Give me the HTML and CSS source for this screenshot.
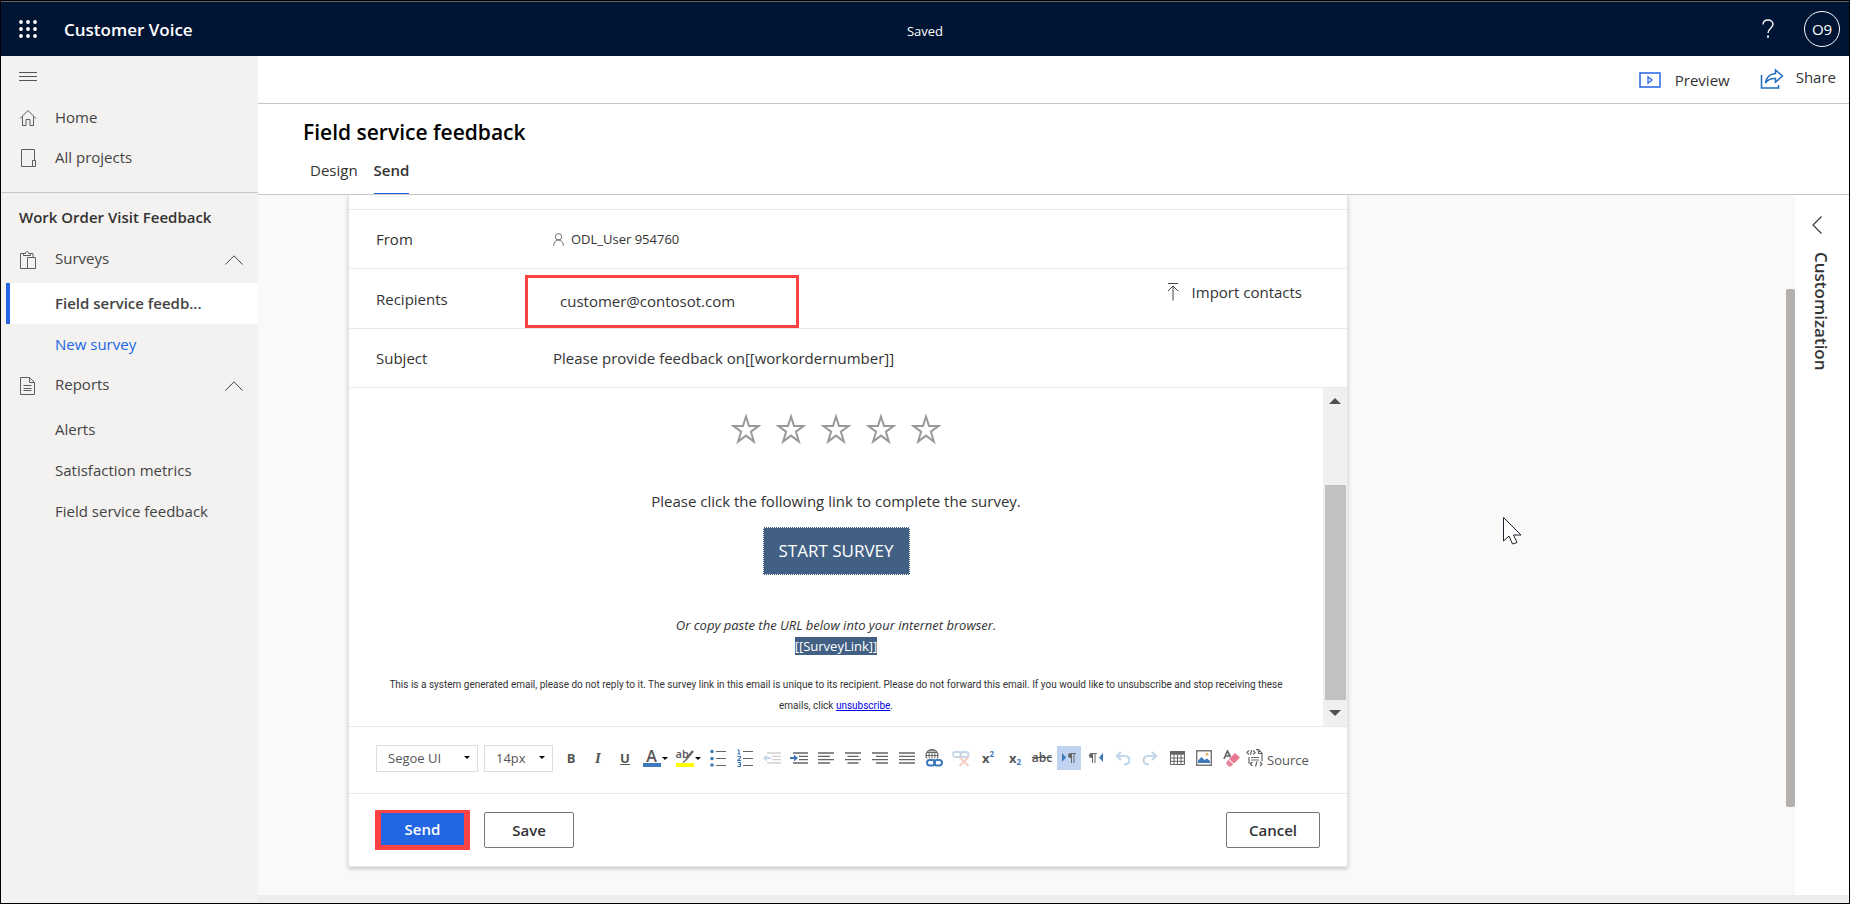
FILE: index.html
```html
<!DOCTYPE html>
<html lang="en">
<head>
<meta charset="utf-8">
<title>Customer Voice</title>
<link rel="stylesheet" href="styles.css">
</head>
<body>
<div class="app">
  <header class="topbar">
    <div class="top-left">
      <button class="bare waffle" type="button" aria-label="App launcher">
        <svg width="18" height="18" viewBox="0 0 18 18" fill="#fff"><circle cx="2" cy="2" r="1.9"/><circle cx="9" cy="2" r="1.9"/><circle cx="16" cy="2" r="1.9"/><circle cx="2" cy="9" r="1.9"/><circle cx="9" cy="9" r="1.9"/><circle cx="16" cy="9" r="1.9"/><circle cx="2" cy="16" r="1.9"/><circle cx="9" cy="16" r="1.9"/><circle cx="16" cy="16" r="1.9"/></svg>
      </button>
      <span class="brand">Customer Voice</span>
    </div>
    <span class="status">Saved</span>
    <div class="top-actions">
      <button class="bare" type="button" aria-label="Help">
        <svg width="12" height="20" viewBox="0 0 12 20" fill="none" stroke="#fff" stroke-width="1.4"><path d="M1 5.500C1 2.500 3.200 1 6 1s5 1.700 5 4.300c0 3.700-5 4.200-5 8.700"/><path d="M6 16.500v2.200" stroke-width="1.800"/></svg>
      </button>
      <button class="bare avatar" type="button">O9</button>
    </div>
  </header>

  <div class="body">
    <nav class="sidebar">
      <button class="bare burger" type="button" aria-label="Collapse navigation">
        <svg width="18" height="10" viewBox="0 0 18 10" stroke="#555" stroke-width="1"><path d="M0 .5h18M0 4.500h18M0 8.500h18"/></svg>
      </button>
      <a class="nav-row" href="#">
        <svg width="18" height="18" viewBox="0 0 18 18" fill="none" stroke="#605e5c"><path d="M1 9.500 9 1.500l8 8M3.500 7.500v9h3.500v-6h4v6h3.500v-9"/></svg>
        <span>Home</span></a>
      <a class="nav-row" href="#">
        <svg width="18" height="20" viewBox="0 0 18 20" fill="none" stroke="#605e5c"><path d="M15.500 12.500v-11h-13v17h11M13.500 12.500h3v6h-3z"/></svg>
        <span>All projects</span></a>
      <div class="nav-project">Work Order Visit Feedback</div>
      <button class="bare nav-row nav-group" type="button">
        <svg width="18" height="20" viewBox="0 0 18 20" fill="none" stroke="#605e5c"><path d="M4.500 3.500h-3v15h7M11.500 3.500h2.500v4M4.500 5.500v-2h2c0-2.500 3-2.500 3 0h2v2zM8.500 7.500h8v11h-8z"/></svg>
        <span>Surveys</span>
        <svg class="chev" width="18" height="10" viewBox="0 0 18 10" fill="none" stroke="#444"><path d="M.5 9.500 9 .8l8.500 8.700"/></svg>
      </button>
      <a class="nav-row nav-child selected" href="#"><span>Field service feedb...</span></a>
      <a class="nav-row nav-child accent" href="#"><span>New survey</span></a>
      <button class="bare nav-row nav-group" type="button">
        <svg width="18" height="20" viewBox="0 0 18 20" fill="none" stroke="#605e5c"><path d="M1.500 1.500h9l5 5v12h-14zM10.500 1.500v5h5M4.500 9.500h8M4.500 12.500h8M4.500 14.500h8"/></svg>
        <span>Reports</span>
        <svg class="chev" width="18" height="10" viewBox="0 0 18 10" fill="none" stroke="#444"><path d="M.5 9.500 9 .8l8.500 8.700"/></svg>
      </button>
      <a class="nav-row nav-child" href="#"><span>Alerts</span></a>
      <a class="nav-row nav-child" href="#"><span>Satisfaction metrics</span></a>
      <a class="nav-row nav-child" href="#"><span>Field service feedback</span></a>
    </nav>

    <main class="main">
      <div class="commands">
        <button class="bare command" type="button">
          <svg width="22" height="16" viewBox="0 0 22 16" fill="none" stroke="#2266e3"><path d="M1 1h20v14H1z" stroke-width="1.500"/><path d="M9 4.800v6.400L13 8z" stroke-width="1.300"/></svg>
          <span>Preview</span></button>
        <button class="bare command share" type="button">
          <svg width="24" height="22" viewBox="0 0 24 22" fill="none" stroke="#1f6cbf" stroke-width="1.500"><path d="M1.500 7v13h17v-3"/><path d="M15.500 2l7 6-7 6v-3.500c-5-.3-7.800 1.200-10 4.500.8-5.500 4-9 10-9.500z"/></svg>
          <span>Share</span></button>
      </div>
      <div class="heading">
        <h1>Field service feedback</h1>
        <div class="tabs">
          <a class="tab" href="#">Design</a>
          <a class="tab active" href="#">Send</a>
        </div>
      </div>

      <div class="workspace">
        <div class="canvas">
          <form class="card">
            <div class="row-cut"></div>
            <div class="field">
              <span class="label">From</span>
              <span class="sender">
                <svg width="11" height="13" viewBox="0 0 11 13" fill="none" stroke="#605e5c" stroke-width=".9"><circle cx="5.500" cy="3.800" r="3.200"/><path d="M.6 12.800C.8 9 3 7 5.500 7s4.700 2 4.900 5.800"/></svg>
                ODL_User 954760</span>
            </div>
            <div class="field recipients">
              <label class="label" for="recipients">Recipients</label>
              <input class="text marked" id="recipients" type="text" value="customer@contosot.com">
              <button class="bare import" type="button">
                <svg width="12" height="19" viewBox="0 0 12 19" fill="none" stroke="#444"><path d="M1 1.500h10M6 18.500v-14M1 9l5-5 5 5"/></svg>
                <span>Import contacts</span></button>
            </div>
            <div class="field">
              <label class="label" for="subject">Subject</label>
              <input class="text subject" id="subject" type="text" value="Please provide feedback on[[workordernumber]]">
            </div>

            <div class="editor">
              <div class="message">
                <div class="stars">
                  <svg width="30" height="31" viewBox="0 0 30 31"><path d="M15 2.500 18 12h9.500l-7.600 5.700 3 9.800L15 21.600l-7.900 5.900 3-9.800L2.500 12H12z"/></svg>
                  <svg width="30" height="31" viewBox="0 0 30 31"><path d="M15 2.500 18 12h9.500l-7.600 5.700 3 9.800L15 21.600l-7.900 5.900 3-9.800L2.500 12H12z"/></svg>
                  <svg width="30" height="31" viewBox="0 0 30 31"><path d="M15 2.500 18 12h9.500l-7.600 5.700 3 9.800L15 21.600l-7.900 5.900 3-9.800L2.500 12H12z"/></svg>
                  <svg width="30" height="31" viewBox="0 0 30 31"><path d="M15 2.500 18 12h9.500l-7.600 5.700 3 9.800L15 21.600l-7.900 5.900 3-9.800L2.500 12H12z"/></svg>
                  <svg width="30" height="31" viewBox="0 0 30 31"><path d="M15 2.500 18 12h9.500l-7.600 5.700 3 9.800L15 21.600l-7.900 5.900 3-9.800L2.500 12H12z"/></svg>
                </div>
                <p class="prompt">Please click the following link to complete the survey.</p>
                <button class="start" type="button">START SURVEY</button>
                <p class="copy">Or copy paste the URL below into your internet browser.</p>
                <span class="token">[[SurveyLink]]</span>
                <p class="legal">This is a system generated email, please do not reply to it. The survey link in this email is unique to its recipient. Please do not forward this email. If you would like to unsubscribe and stop receiving these emails, click <a href="#">unsubscribe</a>.</p>
              </div>
              <div class="scroll">
                <svg width="12" height="6" viewBox="0 0 12 6" fill="#505050"><path d="M6 0l6 6H0z"/></svg>
                <div class="scroll-thumb"></div>
                <svg width="12" height="6" viewBox="0 0 12 6" fill="#505050"><path d="M0 0h12L6 6z"/></svg>
              </div>
            </div>

            <div class="tools">
              <div class="pick font"><select aria-label="Font"><option>Segoe UI</option></select>
                <svg width="6" height="3" viewBox="0 0 6 3"><path d="M0 0h6L3 3z"/></svg></div>
              <div class="pick size"><select aria-label="Size"><option>14px</option></select>
                <svg width="6" height="3" viewBox="0 0 6 3"><path d="M0 0h6L3 3z"/></svg></div>
              <div class="icons">
                <button class="bare tool glyph" type="button">B</button>
                <button class="bare tool glyph ital" type="button">I</button>
                <button class="bare tool glyph under" type="button">U</button>
                <button class="bare tool wide" type="button" aria-label="Text color"><span class="ink">A</span><svg width="6" height="3" viewBox="0 0 6 3"><path d="M0 0h6L3 3z"/></svg></button>
                <button class="bare tool wide" type="button" aria-label="Highlight"><span class="ink mark">ab<svg class="pen" width="12" height="13" viewBox="0 0 12 13"><path d="M11 1 5 8" stroke="#666" stroke-width="2.500"/><path d="M5 7l1 2-4 3.500H0L3 10z" fill="#666"/></svg></span><svg width="6" height="3" viewBox="0 0 6 3"><path d="M0 0h6L3 3z"/></svg></button>
                <button class="bare tool" type="button" aria-label="Bulleted list"><svg width="16" height="18" viewBox="0 0 16 18"><g fill="#3f79b9"><circle cx="2" cy="2.500" r="1.800"/><circle cx="2" cy="9.500" r="1.800"/><circle cx="2" cy="16" r="1.800"/></g><path d="M6 2.500h10M6 9.500h10M6 16.500h10" stroke="#666"/></svg></button>
                <button class="bare tool" type="button" aria-label="Numbered list"><svg width="16" height="18" viewBox="0 0 16 18" fill="none"><path d="M.5 1h1.500v4M.5 5h3M.5 7.500h3V9l-3 2.500h3.500M.5 13.500h3v4h-3M1.500 15.500h2" stroke="#3f79b9" stroke-width="1.100"/><path d="M6 2.500h10M6 9.500h10M6 16.500h10" stroke="#666"/></svg></button>
                <button class="bare tool faded" type="button" aria-label="Decrease indent"><svg width="18" height="12" viewBox="0 0 18 12"><path d="M4 1h14M9 4.300h9M9 7.600h9M4 11h14" stroke="#666" stroke-width="1.300"/><path d="M0 6l4-3.500V5h4v2H4v2.500z" fill="#3f79b9"/></svg></button>
                <button class="bare tool" type="button" aria-label="Increase indent"><svg width="18" height="12" viewBox="0 0 18 12"><path d="M3 1h15M9 4.300h9M9 7.600h9M3 11h15" stroke="#666" stroke-width="1.300"/><path d="M8 6 4 2.500V5H0v2h4v2.500z" fill="#3f79b9"/></svg></button>
                <button class="bare tool" type="button" aria-label="Align left"><svg width="16" height="12" viewBox="0 0 16 12" stroke="#666" stroke-width="1.300"><path d="M0 1h16M0 4.300h12M0 7.600h16M0 11h12"/></svg></button>
                <button class="bare tool" type="button" aria-label="Center"><svg width="16" height="12" viewBox="0 0 16 12" stroke="#666" stroke-width="1.300"><path d="M0 1h16M2.500 4.300h11M0 7.600h16M2.500 11h11"/></svg></button>
                <button class="bare tool" type="button" aria-label="Align right"><svg width="16" height="12" viewBox="0 0 16 12" stroke="#666" stroke-width="1.300"><path d="M0 1h16M4 4.300h12M0 7.600h16M4 11h12"/></svg></button>
                <button class="bare tool" type="button" aria-label="Justify"><svg width="16" height="12" viewBox="0 0 16 12" stroke="#666" stroke-width="1.300"><path d="M0 1h16M0 4.300h16M0 7.600h16M0 11h16"/></svg></button>
                <button class="bare tool" type="button" aria-label="Link"><svg width="18" height="18" viewBox="0 0 18 18" fill="none"><circle cx="7" cy="6.500" r="6" stroke="#666" stroke-width="1.200"/><path d="M7 .5v12M1 6.500h12M2 3.500h10" stroke="#666"/><ellipse cx="7" cy="6.500" rx="3" ry="6" stroke="#666"/><path d="M0 9.500h18v8.500H0z" fill="#fff"/><rect x="2" y="11" width="8" height="5.500" rx="2.700" stroke="#3f79b9" stroke-width="2"/><rect x="9" y="11" width="8" height="5.500" rx="2.700" stroke="#3f79b9" stroke-width="2"/></svg></button>
                <button class="bare tool faded" type="button" aria-label="Unlink"><svg width="18" height="18" viewBox="0 0 18 18" fill="none"><rect x="1" y="3" width="8" height="5" rx="2.500" stroke="#3f79b9" stroke-width="1.800"/><rect x="8.500" y="3" width="8" height="5" rx="2.500" stroke="#3f79b9" stroke-width="1.800"/><path d="M7.500 8l9 9M16.500 8l-9 9" stroke="#e35b3c" stroke-width="2"/></svg></button>
                <button class="bare tool glyph" type="button">x<sup>2</sup></button>
                <button class="bare tool glyph" type="button">x<sub>2</sub></button>
                <button class="bare tool glyph strike" type="button">abc</button>
                <button class="bare tool on" type="button" aria-label="Left to right"><svg width="14" height="10" viewBox="0 0 14 10"><path d="M0 0v9l4-4.500z" fill="#3f79b9"/><path d="M10 0H8.500a2.500 2.500 0 0 0 0 5H9v5h1V1h1.500v9h1V1H14V0z" fill="#666"/></svg></button>
                <button class="bare tool" type="button" aria-label="Right to left"><svg width="14" height="10" viewBox="0 0 14 10"><path d="M14 0v9l-4-4.500z" fill="#3f79b9"/><path d="M4 0H2.500a2.500 2.500 0 0 0 0 5H3v5h1V1h1.500v9h1V1H8V0z" fill="#666"/></svg></button>
                <button class="bare tool faded" type="button" aria-label="Undo"><svg width="16" height="15" viewBox="0 0 16 15" fill="none" stroke="#3f79b9" stroke-width="2.200"><path d="M6 1 2 5l4 4M2 5h8c6 0 6 8.500-1 8.500"/></svg></button>
                <button class="bare tool faded" type="button" aria-label="Redo"><svg width="16" height="15" viewBox="0 0 16 15" fill="none" stroke="#3f79b9" stroke-width="2.200"><path d="M10 1l4 4-4 4M14 5H6c-6 0-6 8.500 1 8.500"/></svg></button>
                <button class="bare tool" type="button" aria-label="Table"><svg width="15" height="14" viewBox="0 0 15 14" fill="none" stroke="#666"><path d="M.5.500h14v13H.5zM.5 7h14M.5 10.300h14M4 3v10.500M7.500 3v10.500M11 3v10.500"/><path d="M0 2h15" stroke-width="3.500"/></svg></button>
                <button class="bare tool" type="button" aria-label="Image"><svg width="16" height="16" viewBox="0 0 16 16"><path d="M.7.700h14.600v14.600H.7z" fill="#fff" stroke="#777" stroke-width="1.400"/><path d="M2 13v-2.500l3.500-3.500 3 3L11 8.500l3 2.500v2z" fill="#3f79b9"/><circle cx="11" cy="4.300" r="1.500" fill="#f4b860"/></svg></button>
                <button class="bare tool" type="button" aria-label="Remove format"><svg width="17" height="17" viewBox="0 0 17 17" fill="none"><path d="M1 9 4.500 1 7.500 7M2.500 6h4" stroke="#666" stroke-width="1.700"/><path d="M12 3l5 4.500-6 6-5-4.500z" fill="#e8788f"/><path d="M5.300 9.700l5 4.500L8 16.500H5.500L3 13z" fill="#e8849a"/></svg></button>
                <button class="bare source" type="button"><svg width="17" height="18" viewBox="0 0 17 18" fill="none" stroke="#666" stroke-width="1.200"><path d="M3 1.500.8 3.500 3 5.500M7 1.500l2.200 2L7 5.500M5.500 1 4.500 6M10 .700h2.500l3.500 3.500v8M12.500 1v3.500H16M3 8v6h2M5 8.500h8M5 11h8M6.500 13 4.500 15l2 2M14 13l2 2-2 2M11 12.500l-1.500 5"/></svg><span>Source</span></button>
              </div>
            </div>

            <div class="actions">
              <button class="btn primary" type="button">Send</button>
              <button class="btn" type="button">Save</button>
              <button class="btn cancel" type="button">Cancel</button>
            </div>
          </form>
        </div>
        <div class="page-scroll"><div class="page-thumb"></div></div>
        <aside class="panel">
          <button class="bare" type="button" aria-label="Expand panel"><svg width="10" height="18" viewBox="0 0 10 18" fill="none" stroke="#333" stroke-width="1.100"><path d="M9.500.500 1 9l8.500 8.500"/></svg></button>
          <span class="panel-title">Customization</span>
        </aside>
      </div>
      <div class="bottom-strip"></div>
    </main>
  </div>
  <svg class="pointer" width="20" height="29" viewBox="0 0 20 29"><path d="M.5.500v23.500l5.500-5 3.500 8 4.500-1.500-3.500-7.500h7.500z" fill="#fff" stroke="#223"/></svg>
</div>
</body>
</html>
```

FILE: styles.css
```css
* { box-sizing: border-box; }

body {
  margin: 0;
  font-family: "Open Sans", "Noto Sans", sans-serif;
  font-size: 15px;
  line-height: 20px;
  color: #333;
}

a { color: inherit; text-decoration: none; }
p, h1 { margin: 0; }
svg { flex: none; display: block; }

.bare {
  padding: 0;
  border: 0;
  background: none;
  font: inherit;
  color: inherit;
  display: flex;
  align-items: center;
}

.app {
  position: relative;
  display: flex;
  flex-direction: column;
  height: 100vh;
  border: 1px solid #000;
  overflow: hidden;
}

/* Top bar */
.topbar {
  flex: none;
  display: grid;
  grid-template-columns: 1fr auto 1fr;
  align-items: center;
  height: 55px;
  padding: 0 9px 0 18px;
  border-top: 1px solid #666;
  background: #001433;
  color: #fff;
}
.top-left { display: flex; align-items: center; }
.waffle { width: 45px; }
.brand { padding-top: 2px; font-size: 17px; font-weight: 600; }
.status { padding: 4px 9px 0 0; font-size: 13px; }
.top-actions { display: flex; justify-content: flex-end; align-items: center; gap: 30px; }
.avatar {
  justify-content: center;
  width: 36px;
  height: 36px;
  border: 1px solid #fff;
  border-radius: 50%;
}

.body { flex: 1; display: flex; min-height: 0; }

/* Sidebar */
.sidebar {
  flex: none;
  width: 257px;
  background: #f3f2f1;
  color: #444;
}
.burger { height: 42px; padding-left: 18px; }
.nav-row {
  display: flex;
  align-items: center;
  width: 100%;
  height: 40px;
  gap: 18px;
  padding: 0 15px 0 18px;
}
.nav-row span { padding-bottom: 2px; }
.nav-project {
  margin-top: 14px;
  padding: 14px 18px;
  border-top: 1px solid #c8c6c4;
  font-weight: 600;
  color: #333;
}
.nav-group { height: 38px; margin-bottom: 4px; }
.nav-group span { padding-bottom: 4px; }
.chev { margin-left: auto; }
.nav-child { height: 41px; padding-left: 54px; }
.selected {
  width: auto;
  margin-left: 5px;
  padding-left: 45px;
  border-left: 4px solid #2266e3;
  background: #fff;
  font-weight: 600;
}
.accent { margin-bottom: 2px; color: #2266e3; }

/* Main column */
.main { flex: 1; display: flex; flex-direction: column; min-width: 0; background: #fff; }
.commands {
  flex: none;
  display: flex;
  justify-content: flex-end;
  align-items: center;
  gap: 30px;
  height: 48px;
  padding-right: 13px;
  border-bottom: 1px solid #c8c6c4;
}
.command { gap: 14px; }
.share { gap: 12px; padding-bottom: 2px; }
.share span { padding-bottom: 4px; }
.heading {
  flex: none;
  padding: 13px 45px 0;
  border-bottom: 1px solid #c8c6c4;
}
h1 { font-size: 21px; line-height: 30px; font-weight: 600; color: #000; }
.tabs { display: flex; gap: 16px; padding: 13px 7px 0; }
.tab { height: 34px; }
.active { font-weight: 600; border-bottom: 1px solid #2266e3; }

.workspace { flex: 1; display: flex; min-height: 0; background: #faf9f8; overflow: hidden; }
.canvas { flex: 1; min-width: 0; padding-left: 90px; }
.bottom-strip { flex: none; height: 8px; background: #ededed; }

/* Email card */
.card {
  max-width: 1000px;
  border: 1px solid #e6e6e6;
  border-top: 0;
  background: #fff;
  box-shadow: 0 2px 4px rgba(0, 0, 0, .2);
}
.row-cut { height: 15px; border-bottom: 1px solid #e8e8e8; }
.field {
  display: flex;
  align-items: center;
  height: 59px;
  padding: 0 45px 0 27px;
  border-bottom: 1px solid #e8e8e8;
}
.recipients { height: 60px; }
.label { width: 177px; }
.recipients .label { width: 149px; }
.sender { display: flex; align-items: center; gap: 7px; font-size: 13px; }
.text {
  padding: 0;
  border: 0;
  background: none;
  font: inherit;
  color: inherit;
}
.subject { flex: 1; }
.marked {
  width: 274px;
  height: 53px;
  margin-top: 5px;
  padding-left: 32px;
  border: 3px solid #ff4242;
}
.import { gap: 13px; margin: 0 0 14px auto; }

.editor { display: flex; border-bottom: 1px solid #e8e8e8; }
.message {
  flex: 1;
  display: flex;
  flex-direction: column;
  align-items: center;
  padding: 26px 30px 10px;
  text-align: center;
}
.stars { display: flex; gap: 15px; }
.stars path { fill: none; stroke: #999; stroke-width: 2; }
.prompt { margin-top: 46px; }
.start {
  height: 48px;
  margin: 16px 0 40px;
  padding: 0 15px;
  border: 1px dotted #fff;
  background: #426084;
  font: inherit;
  font-size: 17px;
  color: #fff;
}
.copy { font-size: 13px; font-style: italic; }
.token {
  margin-top: 2px;
  background: #426084;
  font-size: 13px;
  line-height: 18px;
  color: #fff;
}
.legal {
  margin-top: 19px;
  font-family: Roboto, "Open Sans", sans-serif;
  font-size: 10px;
  line-height: 21px;
}
.legal a { color: #00e; text-decoration: underline; }
.scroll {
  display: flex;
  flex-direction: column;
  align-items: center;
  width: 24px;
  padding: 10px 1px;
  background: #f0f0f0;
}
.scroll-thumb { width: 21px; height: 215px; margin-top: auto; margin-bottom: 10px; background: #c1c1c1; }

/* Editor toolbar */
.tools {
  display: flex;
  align-items: center;
  height: 67px;
  padding: 0 38px 4px 27px;
  border-bottom: 1px solid #e8e8e8;
  color: #555;
}
.pick { position: relative; margin-right: 6px; }
.pick select {
  width: 100%;
  height: 27px;
  padding: 0 0 0 11px;
  border: 1px solid #ddd;
  border-radius: 0;
  appearance: none;
  background: #fff;
  font: inherit;
  font-size: 13px;
  color: #555;
}
.pick svg { position: absolute; right: 8px; top: 11px; }
.font { flex: none; width: 102px; }
.size { flex: none; width: 69px; }
.icons { flex: 1; display: flex; align-items: center; justify-content: space-between; }
.tool { justify-content: center; width: 24px; height: 24px; }
.wide { width: 30px; gap: 1px; }
.glyph { font-size: 13px; font-weight: 700; }
.glyph sup, .glyph sub { font-size: 8px; line-height: 8px; color: #3f79b9; }
.glyph sup { margin-bottom: 8px; }
.glyph sub { margin-top: 8px; }
.ital { font-family: "Liberation Serif", serif; font-size: 15px; font-style: italic; }
.under { text-decoration: underline; }
.strike { font-size: 12px; font-weight: 600; text-decoration: line-through; }
.ink {
  position: relative;
  width: 18px;
  height: 18px;
  border-bottom: 4px solid #3f79b9;
  font-size: 16px;
  font-weight: 600;
  line-height: 14px;
  text-align: center;
}
.mark { border-color: #ff0; font-size: 11px; line-height: 10px; text-align: left; }
.pen { position: absolute; right: 0; top: 1px; }
.faded svg { opacity: .3; }
.on { background: #c0d4f2; }
.source { gap: 4px; font-size: 13px; }
.source span { padding-top: 3px; }

.actions { display: flex; align-items: center; gap: 14px; height: 72px; padding: 0 27px 0 26px; }
.btn {
  width: 90px;
  height: 36px;
  border: 1px solid #777;
  border-radius: 2px;
  background: #fff;
  font: inherit;
  font-weight: 600;
  color: #333;
}
.primary {
  width: 95px;
  height: 40px;
  border: 4px solid #ff4242;
  border-width: 3px 6px 5px;
  border-radius: 0;
  background: #2266e3;
  color: #fff;
}
.cancel { width: 94px; margin-left: auto; }

/* Right edge */
.page-scroll { flex: none; width: 9px; padding-top: 94px; }
.page-thumb { height: 518px; border-radius: 2px; background: #b3b0ad; }
.panel {
  flex: none;
  display: flex;
  flex-direction: column;
  align-items: center;
  gap: 18px;
  width: 54px;
  padding: 21px 10px 0 0;
  background: #fff;
}
.panel-title { padding-left: 8px; writing-mode: vertical-rl; font-weight: 600; font-size: 17px; line-height: 22px; }

.pointer { position: absolute; left: 1502px; top: 516px; }
```
